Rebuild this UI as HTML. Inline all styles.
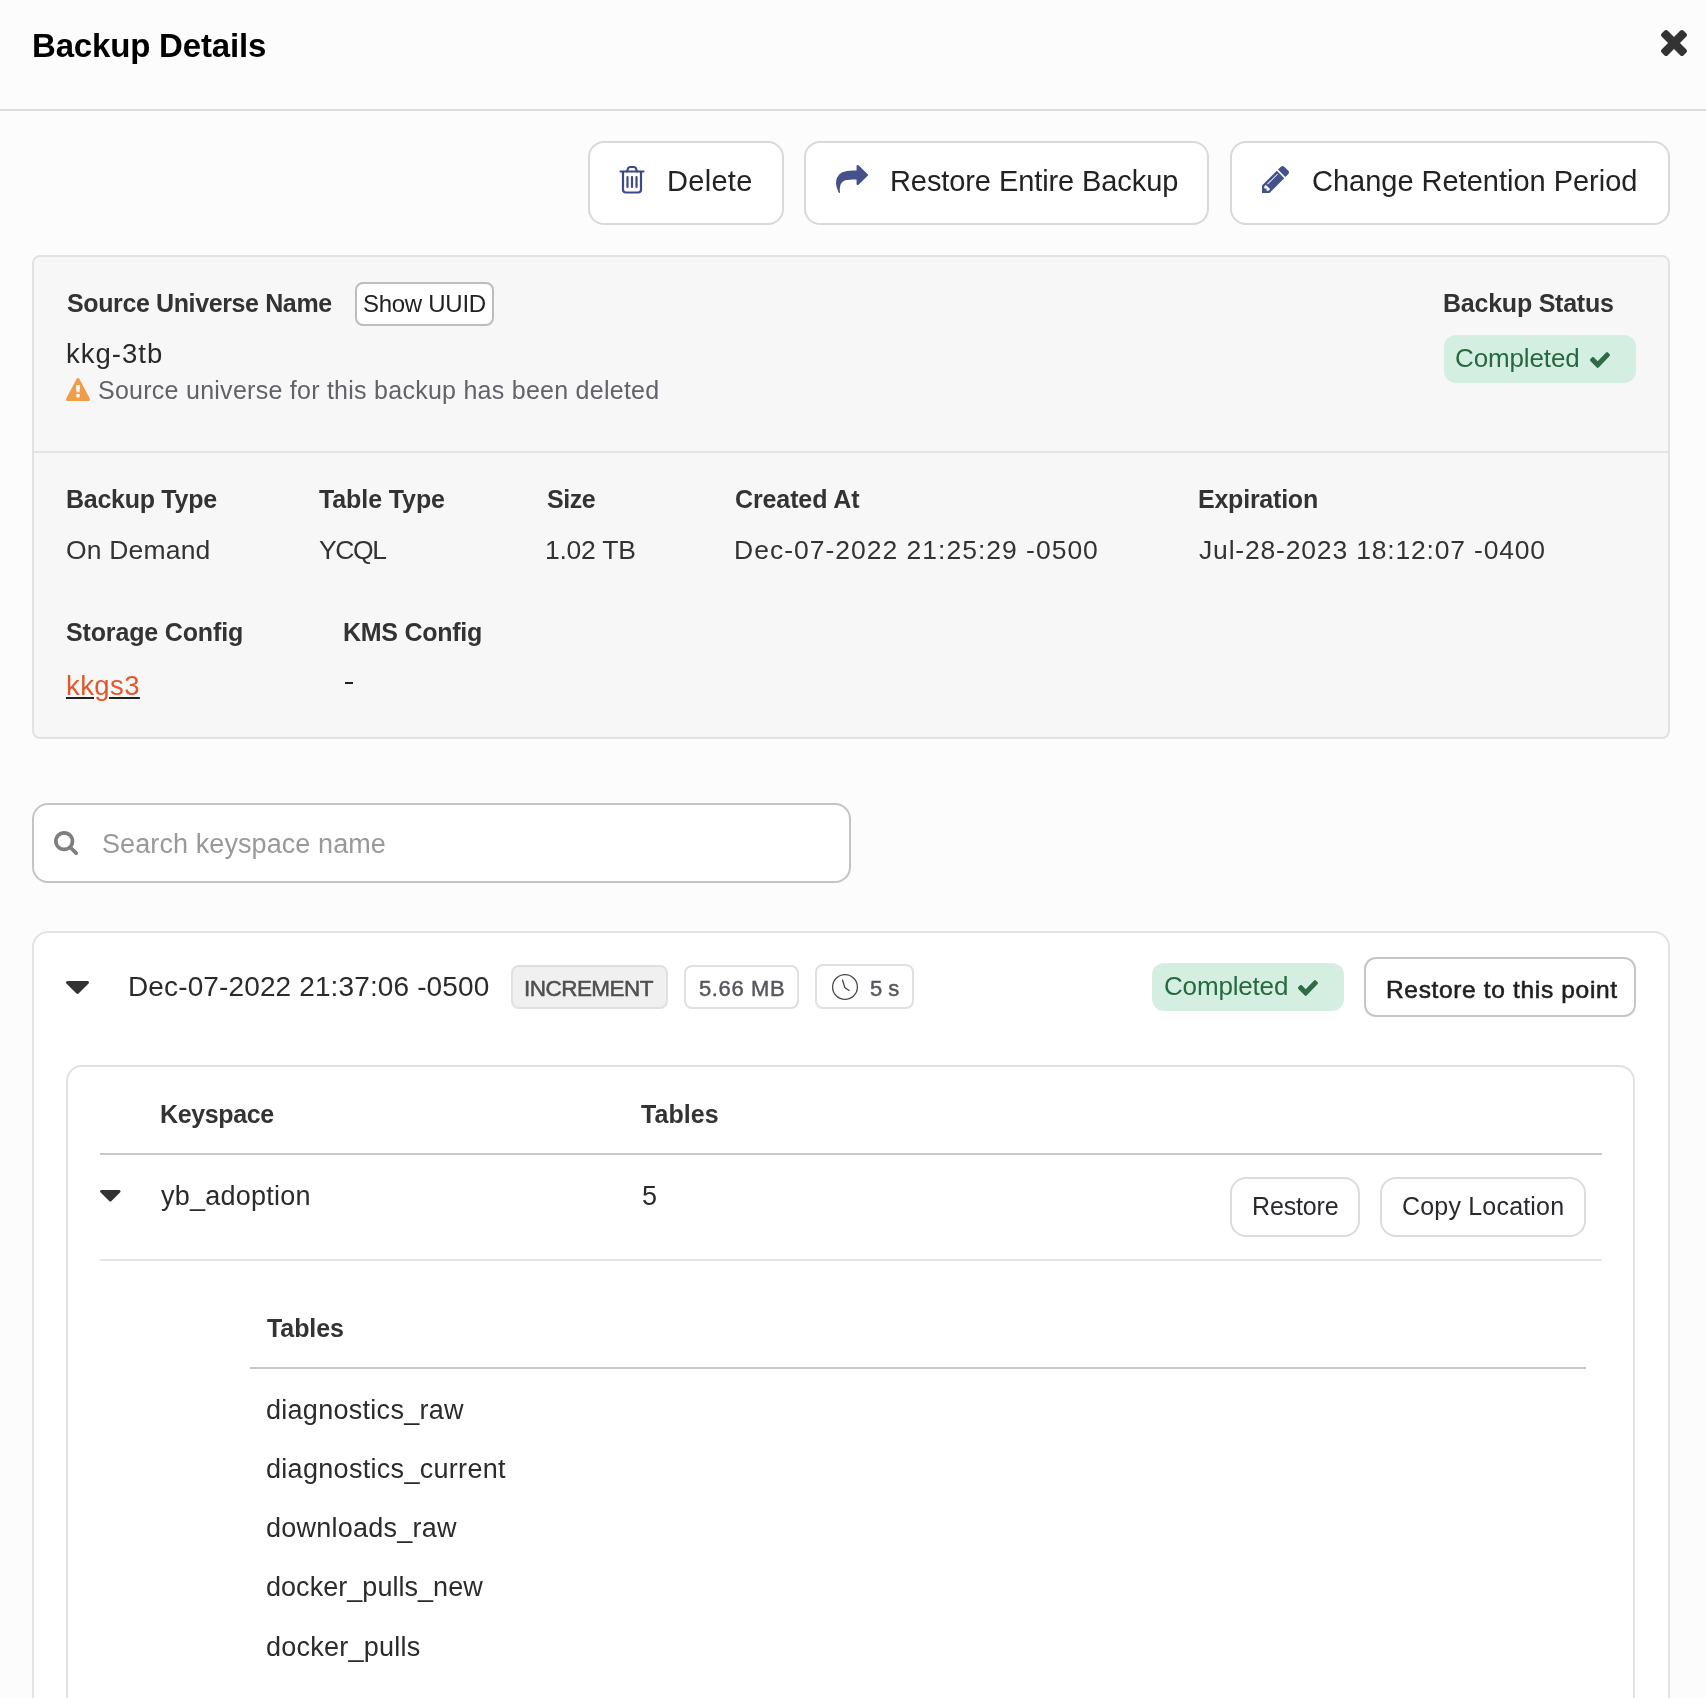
<!DOCTYPE html>
<html>
<head>
<meta charset="utf-8">
<title>Backup Details</title>
<style>
html,body{margin:0;padding:0;}
body{width:1706px;height:1698px;overflow:hidden;position:relative;background:#fcfcfc;font-family:"Liberation Sans", sans-serif;}
.t{position:absolute;white-space:nowrap;will-change:transform;}
.b{position:absolute;box-sizing:border-box;}
svg.i{position:absolute;overflow:visible;}
</style>
</head>
<body>
<!-- header -->
<div class="b" style="left:0;top:109px;width:1706px;height:2px;background:#dcdcdc;"></div>
<svg class="i" style="left:1661px;top:30px;width:26px;height:26px;" viewBox="302 366 1188 1188"><path fill="#333" d="M1490 1322q0 40-28 68l-136 136q-28 28-68 28t-68-28l-294-294-294 294q-28 28-68 28t-68-28l-136-136q-28-28-28-68t28-68l294-294-294-294q-28-28-28-68t28-68l136-136q28-28 68-28t68 28l294 294 294-294q28-28 68-28t68 28l136 136q28 28 28 68t-28 68l-294 294 294 294q28 28 28 68z"/></svg>

<!-- action buttons -->
<div class="b" style="left:588px;top:141px;width:196px;height:84px;border:2px solid #d9d9dc;border-radius:16px;background:#fff;"></div>
<div class="b" style="left:804px;top:141px;width:405px;height:84px;border:2px solid #d9d9dc;border-radius:16px;background:#fff;"></div>
<div class="b" style="left:1230px;top:141px;width:440px;height:84px;border:2px solid #d9d9dc;border-radius:16px;background:#fff;"></div>
<svg class="i" style="left:619px;top:165px;width:26px;height:29px;" viewBox="0 0 26 29">
  <g fill="none" stroke="#3d4a85" stroke-width="2.2" stroke-linecap="round" stroke-linejoin="round">
    <line x1="1.5" y1="6.5" x2="24.5" y2="6.5"/>
    <path d="M8 6.5 L9.2 3 Q9.8 2 11 2 L15 2 Q16.2 2 16.8 3 L18 6.5"/>
    <path d="M4 7 V24.5 Q4 27.5 7 27.5 H19 Q22 27.5 22 24.5 V7"/>
    <line x1="8.5" y1="12" x2="8.5" y2="22"/>
    <line x1="13" y1="12" x2="13" y2="22"/>
    <line x1="17.5" y1="12" x2="17.5" y2="22"/>
  </g>
</svg>
<svg class="i" style="left:836px;top:165px;width:32px;height:28px;" viewBox="0 64 1792 1600" preserveAspectRatio="none"><path fill="#44518a" d="M1792 640q0 26-19 45l-512 512q-19 19-45 19t-45-19-19-45v-256h-224q-98 0-175.5 6t-154 21.5-133 42.5-105.5 69.5-80 101-48.5 138.5-17.5 181q0 55 5 123 0 6 2.5 23.5t2.5 26.5q0 15-8.5 25t-23.5 10q-16 0-28-17-7-9-13-22t-13.5-30-10.5-24q-127-285-127-451 0-199 53-333 162-403 875-403h224v-256q0-26 19-45t45-19 45 19l512 512q19 19 19 45z"/></svg>
<svg class="i" style="left:1262px;top:166px;width:27px;height:27px;" viewBox="128 149 1515 1515"><path fill="#44518a" d="M491 1536l91-91-235-235-91 91v107h128v128h107zm523-928q0-22-22-22-10 0-17 7l-542 542q-7 7-7 17 0 22 22 22 10 0 17-7l542-542q7-7 7-17zm-54-192l416 416-832 832h-416v-416zm683 96q0 53-37 90l-166 166-416-416 166-165q36-38 90-38 53 0 91 38l235 234q37 39 37 91z"/></svg>

<!-- info panel -->
<div class="b" style="left:32px;top:255px;width:1638px;height:484px;border:2px solid #e2e2e5;border-radius:8px;background:#f7f7f7;"></div>
<div class="b" style="left:34px;top:451px;width:1634px;height:2px;background:#e3e3e6;"></div>
<div class="b" style="left:344.5px;top:681.7px;width:8.3px;height:2.2px;background:#222;"></div>
<div class="b" style="left:355px;top:282px;width:139px;height:44px;border:2px solid #bdbdbd;border-radius:8px;background:#fff;"></div>
<svg class="i" style="left:66px;top:378px;width:24px;height:23px;" viewBox="-1 0 1794 1664" preserveAspectRatio="none"><path fill="#f09d4a" d="M1024 1375v-190q0-14-9.5-23.5t-22.5-9.5h-192q-13 0-22.5 9.5t-9.5 23.5v190q0 14 9.5 23.5t22.5 9.5h192q13 0 22.5-9.5t9.5-23.5zm-2-374l18-459q0-12-10-19-13-11-24-11h-220q-11 0-24 11-10 7-10 21l17 457q0 10 10 16.5t24 6.5h185q14 0 23.5-6.5t10.5-16.5zm-14-934l768 1408q35 63-2 126-17 29-46.5 46t-63.5 17h-1536q-34 0-63.5-17t-46.5-46q-37-63-2-126l768-1408q17-31 47-49t65-18 65 18 47 49z"/></svg>
<div class="b" style="left:1444px;top:335px;width:192px;height:48px;border-radius:12px;background:#d5eee2;"></div>
<svg class="i" style="left:1590px;top:352px;width:20px;height:16px;" viewBox="121 334 1550 1188" preserveAspectRatio="none"><path fill="#2e6b46" d="M1671 566q0 40-28 68l-724 724-136 136q-28 28-68 28t-68-28l-136-136-362-362q-28-28-28-68t28-68l136-136q28-28 68-28t68 28l294 295 656-657q28-28 68-28t68 28l136 136q28 28 28 68z"/></svg>

<!-- search -->
<div class="b" style="left:32px;top:803px;width:819px;height:80px;border:2px solid #c4c4c4;border-radius:16px;background:#fff;"></div>
<svg class="i" style="left:54px;top:831.3px;width:24px;height:24px;" viewBox="64 128 1664 1664"><path fill="#7e7e7e" d="M1216 832q0-185-131.5-316.5t-316.5-131.5-316.5 131.5-131.5 316.5 131.5 316.5 316.5 131.5 316.5-131.5 131.5-316.5zm512 832q0 52-38 90t-90 38q-54 0-90-38l-343-342q-179 124-399 124-143 0-273.5-55.5t-225-150-150-225-55.5-273.5 55.5-273.5 150-225 225-150 273.5-55.5 273.5 55.5 225 150 150 225 55.5 273.5q0 220-124 399l343 343q37 37 37 90z"/></svg>

<!-- outer card -->
<div class="b" style="left:32px;top:931px;width:1638px;height:900px;border:2px solid #e3e3e6;border-radius:16px;background:#fff;"></div>
<svg class="i" style="left:66px;top:980.8px;width:23px;height:13px;" viewBox="0 640 1024 576" preserveAspectRatio="none"><path fill="#333" d="M1024 704q0 26-19 45l-448 448q-19 19-45 19t-45-19l-448-448q-19-19-19-45t19-45 45-19h896q26 0 45 19t19 45z"/></svg>
<div class="b" style="left:511px;top:965px;width:157px;height:44px;border:2px solid #e0e0e3;border-radius:8px;background:#f0f0f0;"></div>
<div class="b" style="left:684px;top:965px;width:115px;height:44px;border:2px solid #e0e0e3;border-radius:8px;background:#fff;"></div>
<div class="b" style="left:815px;top:964px;width:99px;height:45px;border:2px solid #e0e0e3;border-radius:8px;background:#fff;"></div>
<svg class="i" style="left:832px;top:974px;width:26px;height:26px;" viewBox="0 0 26 26"><g fill="none" stroke="#4a4a4a" stroke-width="1.3" stroke-linecap="round"><circle cx="13" cy="13" r="12.4"/><path d="M10.5 6 L12.8 13.5 L17 16.5"/></g></svg>
<div class="b" style="left:1152px;top:963px;width:192px;height:48px;border-radius:12px;background:#d5eee2;"></div>
<svg class="i" style="left:1298px;top:980px;width:20px;height:16px;" viewBox="121 334 1550 1188" preserveAspectRatio="none"><path fill="#2e6b46" d="M1671 566q0 40-28 68l-724 724-136 136q-28 28-68 28t-68-28l-136-136-362-362q-28-28-28-68t28-68l136-136q28-28 68-28t68 28l294 295 656-657q28-28 68-28t68 28l136 136q28 28 28 68z"/></svg>
<div class="b" style="left:1364px;top:957px;width:272px;height:60px;border:2px solid #c6c6c6;border-radius:12px;background:#fff;"></div>

<!-- inner card -->
<div class="b" style="left:66px;top:1065px;width:1569px;height:800px;border:2px solid #e0e0e4;border-radius:16px;background:#fff;"></div>
<div class="b" style="left:100px;top:1153px;width:1502px;height:2px;background:#c8c8c8;"></div>
<svg class="i" style="left:100px;top:1190px;width:20.6px;height:11.6px;" viewBox="0 640 1024 576" preserveAspectRatio="none"><path fill="#333" d="M1024 704q0 26-19 45l-448 448q-19 19-45 19t-45-19l-448-448q-19-19-19-45t19-45 45-19h896q26 0 45 19t19 45z"/></svg>
<div class="b" style="left:1230px;top:1177px;width:130px;height:60px;border:2px solid #dcdcdf;border-radius:16px;background:#fff;"></div>
<div class="b" style="left:1380px;top:1177px;width:206px;height:60px;border:2px solid #dcdcdf;border-radius:16px;background:#fff;"></div>
<div class="b" style="left:100px;top:1259px;width:1502px;height:2px;background:#e6e6e9;"></div>
<div class="b" style="left:250px;top:1367px;width:1336px;height:2px;background:#c8c8c8;"></div>

<div class="t" id="title" style="left:31.7px;top:29.0px;font-size:33px;line-height:33px;font-weight:bold;color:#000;letter-spacing:-0.18px;">Backup Details</div>
<div class="t" id="bdel" style="left:666.7px;top:166.9px;font-size:29px;line-height:29px;font-weight:normal;color:#222;letter-spacing:0.30px;">Delete</div>
<div class="t" id="brest" style="left:889.7px;top:166.9px;font-size:29px;line-height:29px;font-weight:normal;color:#222;letter-spacing:-0.09px;">Restore Entire Backup</div>
<div class="t" id="bchg" style="left:1311.8px;top:166.9px;font-size:29px;line-height:29px;font-weight:normal;color:#222;letter-spacing:-0.01px;">Change Retention Period</div>
<div class="t" id="lsun" style="left:66.7px;top:291.0px;font-size:25px;line-height:25px;font-weight:bold;color:#333;letter-spacing:-0.38px;">Source Universe Name</div>
<div class="t" id="suuid" style="left:363.0px;top:291.9px;font-size:24px;line-height:24px;font-weight:normal;color:#222;letter-spacing:-0.28px;">Show UUID</div>
<div class="t" id="uname" style="left:66.3px;top:340.2px;font-size:27.5px;line-height:27.5px;font-weight:normal;color:#2a2a2a;letter-spacing:1.02px;">kkg-3tb</div>
<div class="t" id="warn" style="left:98.0px;top:377.6px;font-size:25px;line-height:25px;font-weight:normal;color:#62626a;letter-spacing:0.26px;">Source universe for this backup has been deleted</div>
<div class="t" id="lbs" style="left:1443.2px;top:291.0px;font-size:25px;line-height:25px;font-weight:bold;color:#333;letter-spacing:-0.23px;">Backup Status</div>
<div class="t" id="comp1" style="left:1455.4px;top:345.2px;font-size:26px;line-height:26px;font-weight:normal;color:#27693f;letter-spacing:-0.12px;">Completed</div>
<div class="t" id="l0" style="left:65.9px;top:486.8px;font-size:25px;line-height:25px;font-weight:bold;color:#333;letter-spacing:-0.27px;">Backup Type</div>
<div class="t" id="v0" style="left:65.9px;top:537.0px;font-size:26.5px;line-height:26.5px;font-weight:normal;color:#333;letter-spacing:0.18px;">On Demand</div>
<div class="t" id="l1" style="left:318.9px;top:486.8px;font-size:25px;line-height:25px;font-weight:bold;color:#333;letter-spacing:-0.10px;">Table Type</div>
<div class="t" id="v1" style="left:318.9px;top:537.0px;font-size:26.5px;line-height:26.5px;font-weight:normal;color:#333;letter-spacing:-1.38px;">YCQL</div>
<div class="t" id="l2" style="left:546.6px;top:486.8px;font-size:25px;line-height:25px;font-weight:bold;color:#333;letter-spacing:-0.44px;">Size</div>
<div class="t" id="v2" style="left:544.6px;top:537.0px;font-size:26.5px;line-height:26.5px;font-weight:normal;color:#333;letter-spacing:-0.24px;">1.02 TB</div>
<div class="t" id="l3" style="left:735.4px;top:486.8px;font-size:25px;line-height:25px;font-weight:bold;color:#333;letter-spacing:-0.11px;">Created At</div>
<div class="t" id="v3" style="left:734.4px;top:537.0px;font-size:26.5px;line-height:26.5px;font-weight:normal;color:#333;letter-spacing:1.00px;">Dec-07-2022 21:25:29 -0500</div>
<div class="t" id="l4" style="left:1197.7px;top:486.8px;font-size:25px;line-height:25px;font-weight:bold;color:#333;letter-spacing:-0.23px;">Expiration</div>
<div class="t" id="v4" style="left:1198.7px;top:537.0px;font-size:26.5px;line-height:26.5px;font-weight:normal;color:#333;letter-spacing:0.82px;">Jul-28-2023 18:12:07 -0400</div>
<div class="t" id="lsc" style="left:66.4px;top:619.8px;font-size:25px;line-height:25px;font-weight:bold;color:#333;letter-spacing:-0.15px;">Storage Config</div>
<div class="t" id="lkms" style="left:342.6px;top:619.8px;font-size:25px;line-height:25px;font-weight:bold;color:#333;letter-spacing:-0.26px;">KMS Config</div>
<div class="t" id="kkgs3" style="left:66.4px;top:672.0px;font-size:27.5px;line-height:27.5px;font-weight:normal;color:#e2582b;letter-spacing:0.41px;text-decoration:underline;text-decoration-color:#222;text-decoration-thickness:2px;text-underline-offset:2px;">kkgs3</div>
<div class="t" id="ph" style="left:102.2px;top:831.3px;font-size:27px;line-height:27px;font-weight:normal;color:#999;letter-spacing:0.09px;">Search keyspace name</div>
<div class="t" id="date" style="left:128.4px;top:973.1px;font-size:28px;line-height:28px;font-weight:normal;color:#2b2b2b;letter-spacing:0.13px;">Dec-07-2022 21:37:06 -0500</div>
<div class="t" id="incr" style="left:524.0px;top:978.1px;font-size:22.5px;line-height:22.5px;font-weight:normal;color:#4f4f51;letter-spacing:-0.53px;-webkit-text-stroke:0.5px #4f4f51;">INCREMENT</div>
<div class="t" id="size" style="left:699.4px;top:977.5px;font-size:22px;line-height:22px;font-weight:normal;color:#56565c;letter-spacing:0.61px;-webkit-text-stroke:0.45px #56565c;">5.66 MB</div>
<div class="t" id="dur" style="left:870.0px;top:977.5px;font-size:22px;line-height:22px;font-weight:normal;color:#56565c;letter-spacing:-0.02px;-webkit-text-stroke:0.45px #56565c;">5 s</div>
<div class="t" id="comp2" style="left:1163.5px;top:973.1px;font-size:26px;line-height:26px;font-weight:normal;color:#27693f;letter-spacing:-0.17px;">Completed</div>
<div class="t" id="rtp" style="left:1385.8px;top:977.8px;font-size:24.5px;line-height:24.5px;font-weight:normal;color:#1f1f23;letter-spacing:0.66px;-webkit-text-stroke:0.6px #1f1f23;">Restore to this point</div>
<div class="t" id="hks" style="left:159.9px;top:1102.1px;font-size:25px;line-height:25px;font-weight:bold;color:#333;letter-spacing:-0.38px;">Keyspace</div>
<div class="t" id="htb" style="left:641.3px;top:1102.2px;font-size:25px;line-height:25px;font-weight:bold;color:#333;letter-spacing:0.05px;">Tables</div>
<div class="t" id="ks" style="left:160.9px;top:1183.2px;font-size:27px;line-height:27px;font-weight:normal;color:#2b2b2b;letter-spacing:0.24px;">yb_adoption</div>
<div class="t" id="n5" style="left:641.7px;top:1182.8px;font-size:27px;line-height:27px;font-weight:normal;color:#2b2b2b;letter-spacing:0.00px;">5</div>
<div class="t" id="brs" style="left:1251.6px;top:1194.2px;font-size:25px;line-height:25px;font-weight:normal;color:#2a2a2e;letter-spacing:-0.16px;">Restore</div>
<div class="t" id="bcl" style="left:1401.7px;top:1194.2px;font-size:25px;line-height:25px;font-weight:normal;color:#2a2a2e;letter-spacing:0.19px;">Copy Location</div>
<div class="t" id="htb2" style="left:266.9px;top:1316.1px;font-size:25px;line-height:25px;font-weight:bold;color:#333;letter-spacing:-0.09px;">Tables</div>
<div class="t" id="tn0" style="left:265.9px;top:1396.9px;font-size:27px;line-height:27px;font-weight:normal;color:#2b2b2b;letter-spacing:0.28px;">diagnostics_raw</div>
<div class="t" id="tn1" style="left:265.9px;top:1455.8px;font-size:27px;line-height:27px;font-weight:normal;color:#2b2b2b;letter-spacing:0.30px;">diagnostics_current</div>
<div class="t" id="tn2" style="left:265.9px;top:1515.1px;font-size:27px;line-height:27px;font-weight:normal;color:#2b2b2b;letter-spacing:0.23px;">downloads_raw</div>
<div class="t" id="tn3" style="left:265.9px;top:1574.4px;font-size:27px;line-height:27px;font-weight:normal;color:#2b2b2b;letter-spacing:0.04px;">docker_pulls_new</div>
<div class="t" id="tn4" style="left:265.9px;top:1633.8px;font-size:27px;line-height:27px;font-weight:normal;color:#2b2b2b;letter-spacing:0.24px;">docker_pulls</div>
</body>
</html>
